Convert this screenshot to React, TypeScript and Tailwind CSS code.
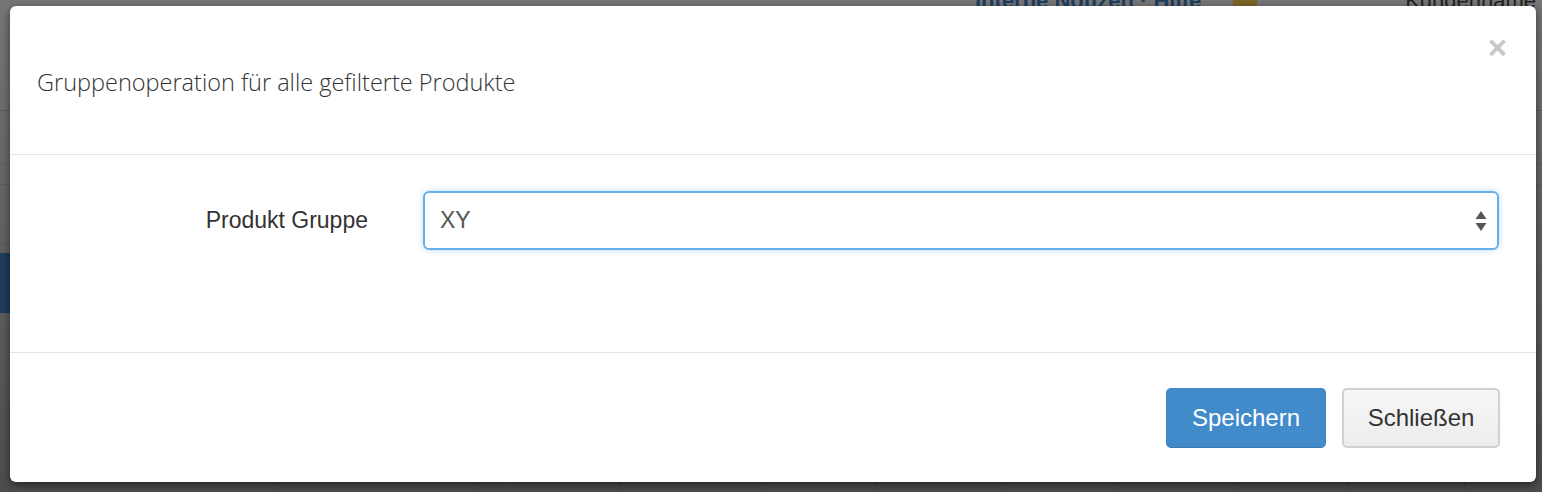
import React from "react";

const sans = { fontFamily: '"Liberation Sans", Arial, sans-serif' };

export default function App() {
  return (
    <div className="relative h-[492px] w-full overflow-hidden bg-gradient-to-b from-[#767676] to-[#4d4d4d]" style={sans}>
      {/* dimmed page behind the modal */}
      <div className="flex h-full flex-col">
        <div className="flex h-[8px] items-end whitespace-nowrap pl-[975px] text-[22px] font-bold leading-none text-[#1d3e5e]">
          <span className="-mb-[4px]">Interne Notizen · Hilfe</span>
          <span className="-mb-[4px] ml-[32px] h-[14px] w-[24px] bg-[#7a6526]"></span>
          <span className="-mb-[4px] ml-[148px] font-normal text-[#222]">Kundenname</span>
        </div>
        <div className="mt-[102px] h-[1px] bg-[#5c5c5c]"></div>
        <div className="mt-[52px] h-[1px] bg-[#5e5e5e]"></div>
        <div className="mt-[20px] h-[1px] bg-[#5e5e5e]"></div>
        <div className="mt-[58px] h-[1px] bg-[#5a5a5a]"></div>
        <div className="mt-[9px] h-[60px] w-[40px] bg-[#1e3c5c]"></div>
        <div className="mt-[18px] h-[1px] bg-[#585858]"></div>
        <div className="mt-[14px] h-[1px] bg-[#555]"></div>
        <div className="mt-[57px] h-[1px] bg-[#505050]"></div>
        <div className="mt-[6px] h-[1px] bg-[#505050]"></div>
        <div className="flex flex-1 pt-[62px]">
          <div className="w-[278px] border-r border-[#454545]"></div>
          <div className="w-[196px] border-r border-[#454545]"></div>
          <div className="w-[146px] border-r border-[#454545]"></div>
          <div className="w-[142px] border-r border-[#454545]"></div>
          <div className="w-[114px] border-r border-[#454545]"></div>
          <div className="w-[126px] border-r border-[#454545]"></div>
          <div className="w-[113px] border-r border-[#454545]"></div>
          <div className="w-[119px] border-r border-[#454545]"></div>
          <div className="w-[115px] border-r border-[#454545]"></div>
          <div className="w-[116px] border-r border-[#454545]"></div>
        </div>
      </div>

      {/* modal */}
      <div className="absolute left-[10px] top-[6px] flex h-[476px] w-[1526px] flex-col rounded-[6px] bg-white shadow-[0_3px_9px_rgba(0,0,0,0.55)]">
        <div className="relative flex h-[149px] items-center border-b border-[#e5e5e5] px-[27px]">
          <h4
            className="mt-[6px] text-[23.5px] font-light leading-none text-[#333]"
            style={{ fontFamily: '"Open Sans", sans-serif' }}
          >
            Gruppenoperation für alle gefilterte Produkte
          </h4>
          <span className="absolute right-[29px] top-[25px] text-[33px] font-bold leading-none text-[#c8c8c8]">
            ×
          </span>
        </div>

        <div className="flex h-[198px] items-start border-b border-[#e5e5e5] pt-[36px]">
          <label className="flex h-[59px] w-[358px] items-center justify-end text-[23px] text-[#333]">
            Produkt Gruppe
          </label>
          <div className="ml-[55px] mr-[37px] flex h-[59px] flex-1 items-center justify-between rounded-[6px] border-2 border-[#66afe9] pl-[15px] pr-[10px] shadow-[0_0_6px_rgba(102,175,233,0.45)]">
            <span className="text-[23px] text-[#555]">XY</span>
            <svg width="12" height="22" viewBox="0 0 12 22">
              <polygon points="6,1 11.5,9 0.5,9" fill="#555" />
              <polygon points="0.5,13 11.5,13 6,21" fill="#555" />
            </svg>
          </div>
        </div>

        <div className="flex flex-1 items-start justify-end gap-[16px] pr-[36px] pt-[35px]">
          <button className="flex h-[60px] w-[160px] items-center justify-center rounded-[5px] border border-[#3f86c4] border-b-[#3a7ab3] bg-[#428bca] text-[24px] text-white">
            Speichern
          </button>
          <button className="flex h-[60px] w-[158px] items-center justify-center rounded-[5px] border-2 border-[#d0d0d0] bg-gradient-to-b from-[#f7f7f7] to-[#ececec] text-[24px] text-[#333]">
            Schließen
          </button>
        </div>
      </div>
    </div>
  );
}
